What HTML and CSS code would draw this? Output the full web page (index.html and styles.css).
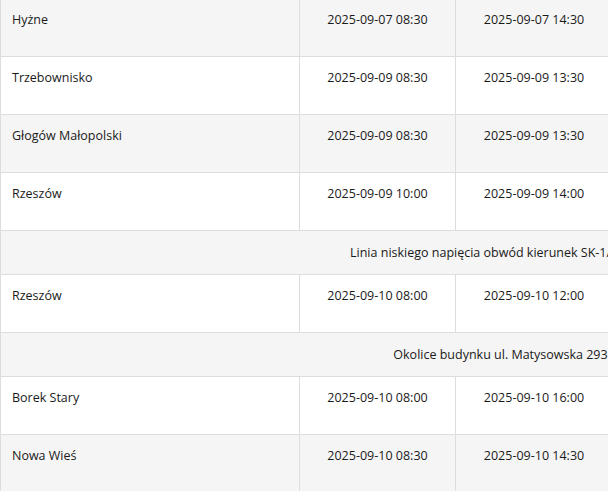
FILE: index.html
```html
<!DOCTYPE html>
<html lang="pl">
<head>
<meta charset="utf-8">
<link rel="stylesheet" href="styles.css">
</head>
<body>
<table class="outages">
  <colgroup>
    <col class="c-place">
    <col class="c-start">
    <col class="c-end">
    <col class="c-area">
  </colgroup>
  <tbody>
    <tr class="row"><td class="place">Hyżne</td><td class="time">2025-09-07 08:30</td><td class="time">2025-09-07 14:30</td><td></td></tr>
    <tr class="row"><td class="place">Trzebownisko</td><td class="time">2025-09-09 08:30</td><td class="time">2025-09-09 13:30</td><td></td></tr>
    <tr class="row"><td class="place">Głogów Małopolski</td><td class="time">2025-09-09 08:30</td><td class="time">2025-09-09 13:30</td><td></td></tr>
    <tr class="row"><td class="place">Rzeszów</td><td class="time">2025-09-09 10:00</td><td class="time">2025-09-09 14:00</td><td></td></tr>
    <tr class="group"><td colspan="4">Linia niskiego napięcia obwód kierunek SK-1/PT-123</td></tr>
    <tr class="row"><td class="place">Rzeszów</td><td class="time">2025-09-10 08:00</td><td class="time">2025-09-10 12:00</td><td></td></tr>
    <tr class="group"><td colspan="4">Okolice budynku ul. Matysowska 293</td></tr>
    <tr class="row"><td class="place">Borek Stary</td><td class="time">2025-09-10 08:00</td><td class="time">2025-09-10 16:00</td><td></td></tr>
    <tr class="row"><td class="place">Nowa Wieś</td><td class="time">2025-09-10 08:30</td><td class="time">2025-09-10 14:30</td><td></td></tr>
  </tbody>
</table>
</body>
</html>
```

FILE: styles.css
```css
html, body {
  margin: 0;
  padding: 0;
  overflow: hidden;
  background: #ffffff;
}

body {
  font-family: "Open Sans", "Noto Sans", sans-serif;
  font-size: 12.5px;
  color: #1a1a1a;
}

.outages {
  width: 1000px;
  table-layout: fixed;
  border-collapse: collapse;
  margin-top: -2px;
}

.c-place { width: 299px; }
.c-start { width: 156px; }
.c-end { width: 157px; }
.c-area { width: 388px; }

.outages td {
  border: 1px solid #dddddd;
  line-height: 18px;
}

.outages tr:nth-child(odd) td {
  background: #f5f5f5;
}

.outages tr:nth-child(even) td {
  background: #ffffff;
}

.row td {
  height: 34px;
  padding: 12px 11px 11px;
  vertical-align: top;
}

.row .time {
  text-align: center;
}

.group td {
  height: 19px;
  padding: 12px 11px;
  text-align: center;
  vertical-align: middle;
}
```
